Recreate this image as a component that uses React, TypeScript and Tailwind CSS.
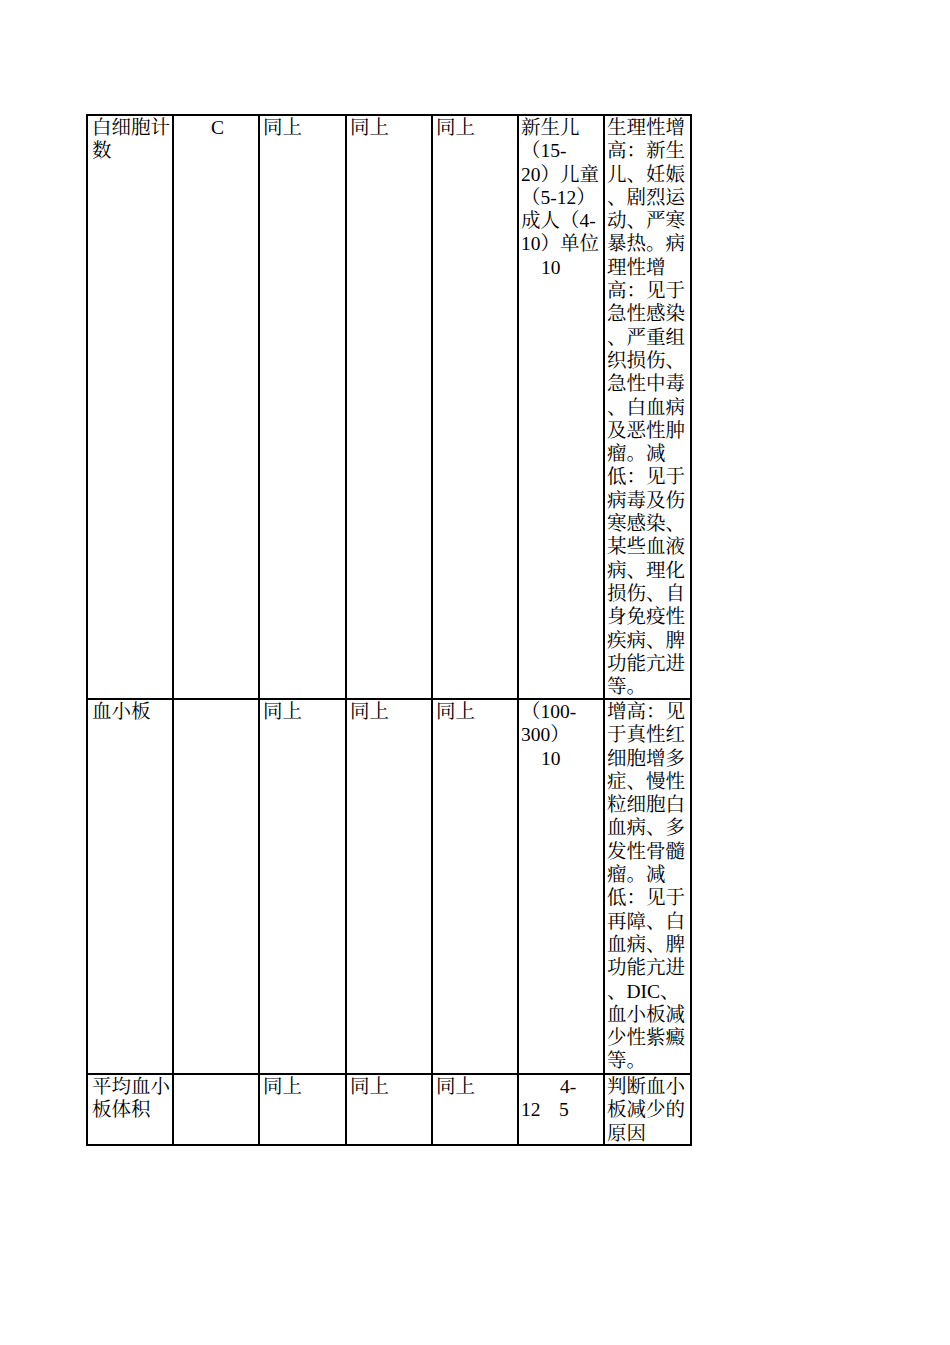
import React from "react";

type Cell = { lines: string[]; center?: boolean };

const rows: { h: number; cells: Cell[] }[] = [
  {
    h: 584,
    cells: [
      { lines: ["白细胞计", "数"] },
      { lines: ["C"], center: true },
      { lines: ["同上"] },
      { lines: ["同上"] },
      { lines: ["同上"] },
      {
        lines: ["新生儿", "（15-", "20）儿童", "（5-12）", "成人（4-", "10）单位", ">10"],
      },
      {
        lines: [
          "生理性增",
          "高：新生",
          "儿、妊娠",
          "、剧烈运",
          "动、严寒",
          "暴热。病",
          "理性增",
          "高：见于",
          "急性感染",
          "、严重组",
          "织损伤、",
          "急性中毒",
          "、白血病",
          "及恶性肿",
          "瘤。减",
          "低：见于",
          "病毒及伤",
          "寒感染、",
          "某些血液",
          "病、理化",
          "损伤、自",
          "身免疫性",
          "疾病、脾",
          "功能亢进",
          "等。",
        ],
      },
    ],
  },
  {
    h: 375,
    cells: [
      { lines: ["血小板"] },
      { lines: [] },
      { lines: ["同上"] },
      { lines: ["同上"] },
      { lines: ["同上"] },
      { lines: ["（100-", "300）", ">10"] },
      {
        lines: [
          "增高：见",
          "于真性红",
          "细胞增多",
          "症、慢性",
          "粒细胞白",
          "血病、多",
          "发性骨髓",
          "瘤。减",
          "低：见于",
          "再障、白",
          "血病、脾",
          "功能亢进",
          "、DIC、",
          "血小板减",
          "少性紫癜",
          "等。",
        ],
      },
    ],
  },
  {
    h: 71,
    cells: [
      { lines: ["平均血小", "板体积"] },
      { lines: [] },
      { lines: ["同上"] },
      { lines: ["同上"] },
      { lines: ["同上"] },
      { lines: ["4-", "12"] },
      { lines: ["判断血小", "板减少的", "原因"] },
    ],
  },
];

const widths = [86, 86, 87, 86, 86, 86, 87];

function SpecialRange() {
  return (
    <>
      <div className="pl-[39px]">4-</div>
      <div className="flex">
        <span className="w-[38px]">12</span>
        <span>5</span>
      </div>
    </>
  );
}

export default function App() {
  return (
    <div
      className="min-h-[1345px] w-[950px] bg-white pl-[86px] pt-[114px] text-black"
      style={{
        fontFamily:
          '"Liberation Serif", "Noto Serif CJK SC", "Noto Sans CJK SC", serif',
      }}
    >
      <div className="inline-flex flex-col border-l-2 border-t-2 border-black">
        {rows.map((row, ri) => (
          <div key={ri} className="flex" style={{ height: row.h }}>
            {row.cells.map((cell, ci) => (
              <div
                key={ci}
                className={`overflow-hidden border-b-2 border-r-2 border-black text-[19.5px] leading-[23.3px] whitespace-pre ${
                  ci === 0 ? "pl-[4px]" : ci >= 5 ? "pl-[2px]" : "pl-[3px]"
                } ${cell.center ? "text-center" : ""}`}
                style={{ width: widths[ci] }}
              >
                {ri === 2 && ci === 5 ? (
                  <SpecialRange />
                ) : (
                  cell.lines.map((l, li) =>
                    l.startsWith(">") ? (
                      <div key={li} className="pl-[20px]">
                        {l.slice(1)}
                      </div>
                    ) : (
                      <div key={li}>{l}</div>
                    )
                  )
                )}
              </div>
            ))}
          </div>
        ))}
      </div>
    </div>
  );
}
